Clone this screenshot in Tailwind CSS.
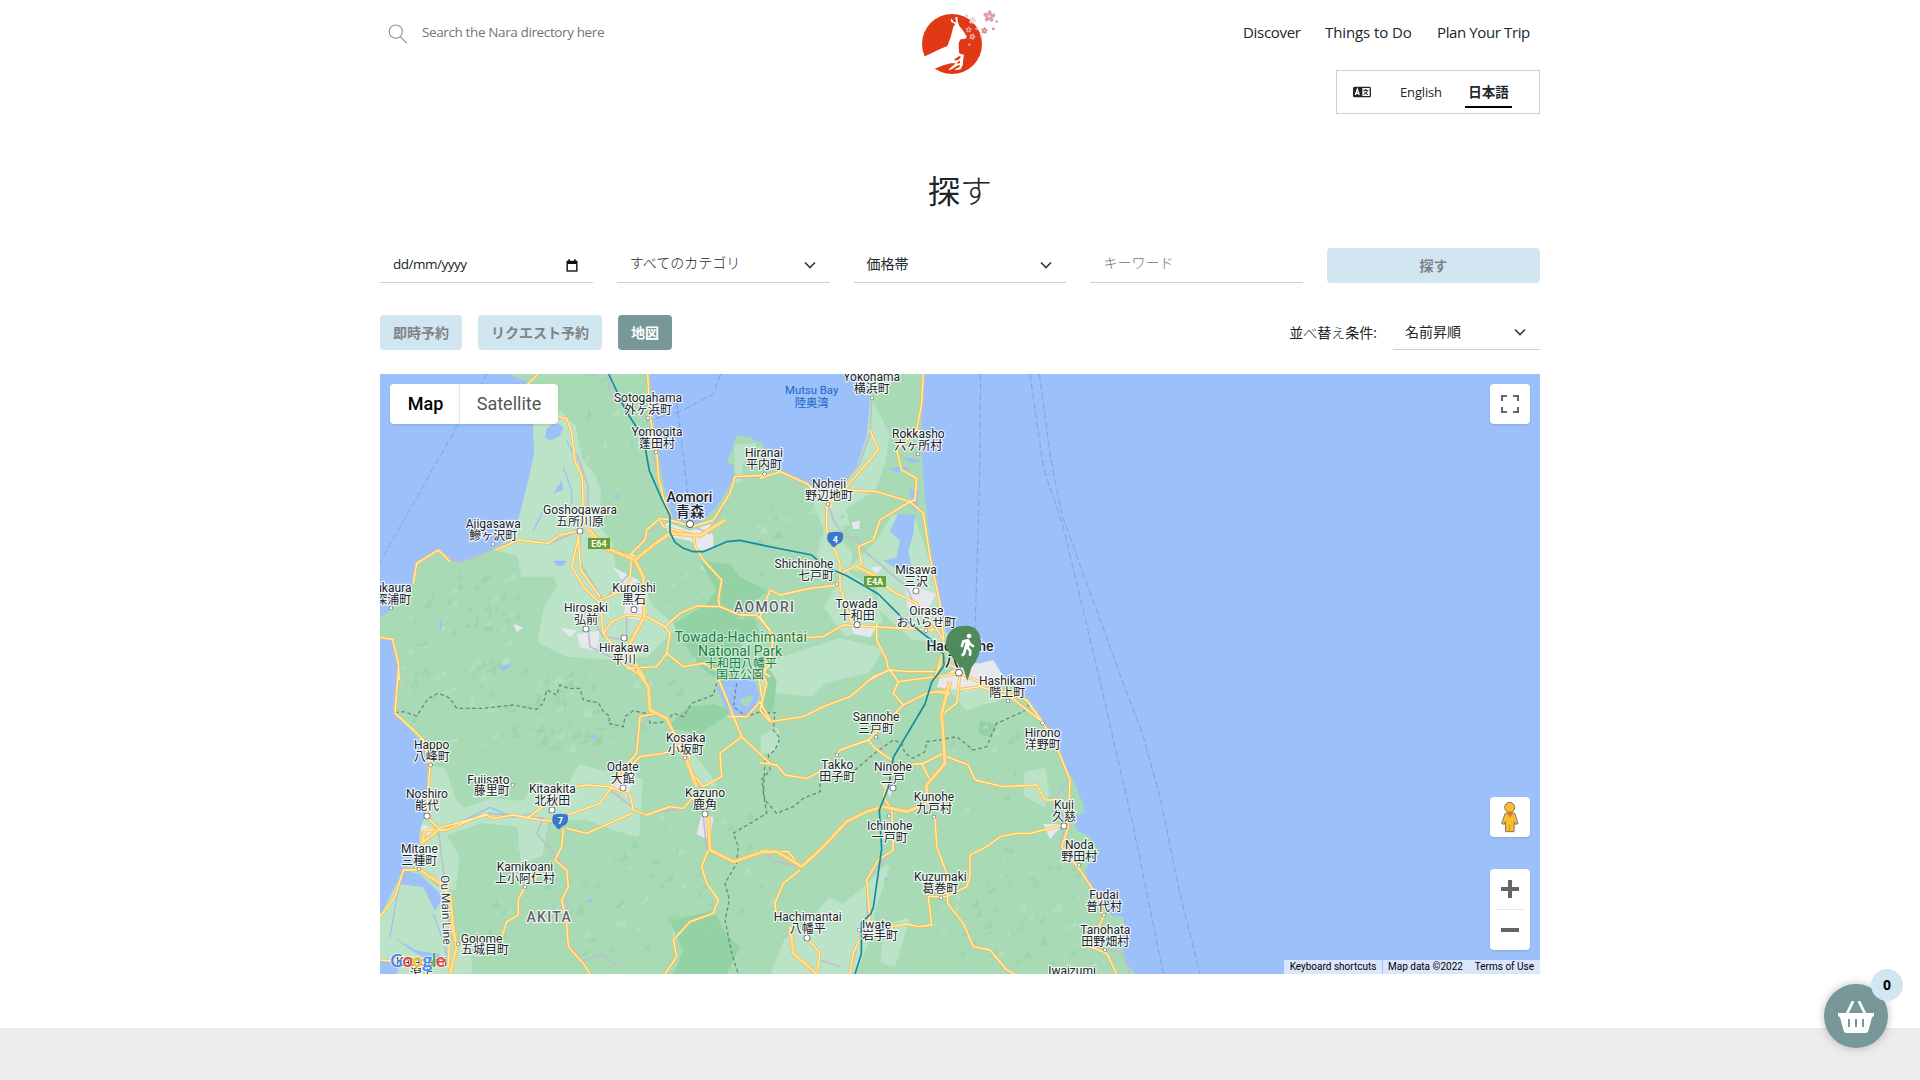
<!DOCTYPE html>
<html lang="ja">
<head>
<meta charset="utf-8">
<title>探す | Nara</title>
<script src="https://cdn.jsdelivr.net/npm/@tailwindcss/browser@4"></script>
</head>
<body class="h-[1080px] overflow-hidden bg-white font-['Open_Sans','Noto_Sans_CJK_JP',sans-serif] text-sm text-[#212529]">
<div class="mx-auto flex h-[1028px] w-[1160px] flex-col">
  <header class="relative flex h-[66px] justify-between">
    <div class="flex h-[66px] items-center pl-2">
      <svg class="mt-0.5 h-5 w-5" viewBox="0 0 20 20" fill="none" stroke="#8a9396" stroke-width="1.1"><circle cx="7.8" cy="7.6" r="6.6"/><path d="M12.3 12.6 18.8 19.2"/></svg>
      <span class="-mt-px ml-[14px] text-[13.5px] tracking-[-0.38px] text-[#6c757d]">Search the Nara directory here</span>
    </div>
    <svg class="absolute left-[530px] top-0 h-[90px] w-[100px]" viewBox="0 0 300 270">
      <circle cx="126" cy="132" r="90" fill="#e13816"/>
      <path fill="#fff" d="M30 176 42 170 92 146 112 138 122 112 130 80 136 72 124 66 122 54 128 60 131 66 138 67 136 51 142 52 144 67 148 78 158 90 171 110 166 116 152 118 146 128 147 158 152 162 162 164 160 176 158 196 152 208 138 210 134 208 148 202 150 194 140 198 128 206 116 211 118 206 138 190 122 190 100 196 74 206 60 212 30 200Z"/>
      <g fill="#e13816"><path d="M134 177l14-9 5 3-7 8-12 3Z"/><path d="M140 188l9-6 2 6-6 3Z"/></g>
      <defs><g id="flower"><ellipse cx="0" cy="-10" rx="6" ry="8.5"/><ellipse cx="0" cy="-10" rx="6" ry="8.5" transform="rotate(72)"/><ellipse cx="0" cy="-10" rx="6" ry="8.5" transform="rotate(144)"/><ellipse cx="0" cy="-10" rx="6" ry="8.5" transform="rotate(216)"/><ellipse cx="0" cy="-10" rx="6" ry="8.5" transform="rotate(288)"/></g></defs>
      <g fill="#dfa0b0"><use href="#flower" transform="translate(238 49) rotate(4)"/>
      <use href="#flower" fill="#f3cdcf" transform="translate(187 62) scale(.6) rotate(15)"/>
      <use href="#flower" fill="#eb9c93" transform="translate(176 89) scale(.53)"/>
      <use href="#flower" fill="#efb3ad" transform="translate(187 110) scale(.52) rotate(20)"/>
      <use href="#flower" fill="#c98894" transform="translate(223 92) scale(.55) rotate(10)"/>
      <circle cx="250" cy="86" r="4.5"/><circle cx="260" cy="65" r="4"/><circle cx="178" cy="134" r="4" fill="#ef8c82"/><circle cx="170" cy="47" r="4.5" fill="#f3c4c8"/><circle cx="200" cy="86" r="4" fill="#e7a0a0"/><circle cx="213" cy="110" r="3" fill="#e7a0a0"/></g>
      <g fill="#fff"><circle cx="238" cy="49" r="3"/><circle cx="187" cy="62" r="2"/><circle cx="176" cy="89" r="2.4" fill="#e13816"/><circle cx="187" cy="110" r="2.4" fill="#e13816"/><circle cx="223" cy="92" r="2"/></g>
    </svg>
    <nav class="flex h-[66px] items-center gap-6 pr-[10px] text-[15px]">
      <a class="w-[58px] whitespace-nowrap tracking-[-0.3px]">Discover</a>
      <a class="w-[88px] whitespace-nowrap tracking-[-0.1px]">Things to Do</a>
      <a class="w-[93px] whitespace-nowrap tracking-[-0.38px]">Plan Your Trip</a>
    </nav>
  </header>
  <div class="mt-1 flex h-11 w-[204px] items-center self-end border border-[#ced1d3] pl-4">
    <svg class="h-3 w-[18px]" viewBox="0 0 54 36"><rect y="2" width="54" height="32" rx="5" fill="#212529"/><path fill="#fff" d="M28 6h22v24H28z"/><path d="M7 27 13 10 19 27M9 22h8" stroke="#fff" stroke-width="4" fill="none"/><path d="M31 13h15M38 9v4M44 14q-4 9-12 12M34 17q4 7 11 9" stroke="#212529" stroke-width="3" fill="none"/></svg>
    <span class="ml-[29px] w-[44px] whitespace-nowrap text-[13px] tracking-[-0.15px]">English</span>
    <span class="ml-[21px] mt-[7px] flex h-[30px] w-[47px] items-center justify-center self-start border-b-2 border-black pt-0.5 text-[13.5px] font-bold">日本語</span>
  </div>
  <h1 class="mt-[53px] flex h-12 items-center justify-center text-[32px]"><span>探</span><span class="font-light">す</span></h1>
  <form class="mt-[33px] grid h-[34px] grid-cols-5 gap-6">
    <div class="flex items-center justify-between border-b border-[#ced1d3] pl-[13px] pr-[15px] text-[13.5px] tracking-[-0.5px]"><span>dd/mm/yyyy</span>
      <svg class="h-[13px] w-3" viewBox="0 0 12 13"><path d="M1.2 2.5h9.6v9.6H1.2z" fill="none" stroke="#222" stroke-width="1.5"/><path d="M1 2h10v3H1zM2.3.3h1.6V3H2.3zM8.1.3h1.6V3H8.1z" fill="#111"/></svg></div>
    <div class="flex items-center justify-between border-b border-[#ced1d3] pl-[13px] pr-[14px]"><span class="-mt-1 font-light">すべてのカテゴリ</span><svg class="h-3 w-3" viewBox="0 0 12 12" fill="none" stroke="#343a40" stroke-width="1.7"><path d="M1 3.5 6 8.5l5-5"/></svg></div>
    <div class="flex items-center justify-between border-b border-[#ced1d3] pl-[13px] pr-[14px]"><span class="-mt-0.5">価格帯</span><svg class="h-3 w-3" viewBox="0 0 12 12" fill="none" stroke="#343a40" stroke-width="1.7"><path d="M1 3.5 6 8.5l5-5"/></svg></div>
    <div class="flex items-center border-b border-[#ced1d3] pl-[13px]"><span class="-mt-1 font-light text-[#6c757d]">キーワード</span></div>
    <button class="h-[35px] rounded bg-[#d2e6f1] font-bold text-[#7d8488]">探す</button>
  </form>
  <div class="mt-[33px] flex h-[35px] items-center gap-4 text-sm">
    <button class="h-[35px] w-[82px] whitespace-nowrap rounded bg-[#d2e6f1] font-bold text-[#7d8488]">即時予約</button>
    <button class="h-[35px] w-[124px] whitespace-nowrap rounded bg-[#d2e6f1] font-bold text-[#7d8488]">リクエスト予約</button>
    <button class="h-[35px] w-[54px] whitespace-nowrap rounded bg-[#789798] font-bold text-white">地図</button>
    <span class="ml-auto text-sm">並<span class="font-light">べ</span>替<span class="font-light">え</span>条件:</span>
    <div class="flex h-[35px] w-[147px] items-center justify-between border-b border-[#ced1d3] pl-3 pr-[14px]"><span>名前昇順</span><svg class="h-3 w-3" viewBox="0 0 12 12" fill="none" stroke="#343a40" stroke-width="1.7"><path d="M1 3.5 6 8.5l5-5"/></svg></div>
  </div>

  <div class="relative mt-6 h-[600px] w-[1160px] overflow-hidden bg-[#9cc0f9] font-['Roboto','Noto_Sans_CJK_JP',sans-serif]">
    <svg class="block h-[600px] w-[1160px]" viewBox="0 0 3480 1800">
      <defs>
        <path id="land" d="M385 0 420 16 445 23 460 150 462 238 448 308 430 378 415 438 400 488 370 503 340 528 290 548 240 568 210 558 175 528 110 568 100 618 80 658 40 703 0 728V788L35 798 55 858 58 900 45 1018 100 1078 135 1118 148 1188 145 1228 138 1318 120 1368 115 1448 70 1488 0 1628V1800H2265L2240 1768 2225 1708 2235 1668 2230 1628 2200 1628 2160 1578 2130 1538 2115 1488 2140 1458 2160 1433 2130 1388 2090 1368 2080 1328 2115 1313 2105 1278 2080 1218 2045 1158 2020 1098 1990 1038 1950 983 1900 928 1870 905 1855 883 1840 858 1800 868 1760 868 1730 818 1695 768 1680 688 1660 588 1645 468 1632 338 1625 238 1625 138 1630 0H1460L1470 88 1460 188 1430 278 1390 338 1340 358 1290 338 1240 308 1205 288 1170 258 1160 233 1145 206 1125 200 1110 188 1070 183 1055 228 1040 265 1062 272 1060 318 1035 358 1010 398 970 438 930 458 875 428 865 388 850 328 832 238 820 128 808 0Z"/>
        <clipPath id="onland"><use href="#land"/></clipPath>
      </defs>
      <use href="#land" fill="#a8dab5"/>
      <g clip-path="url(#onland)">
        <g fill="#bbe3c7" stroke="#bbe3c7" stroke-width="16" stroke-linejoin="round">
          <path d="M460 150 540 120 580 160 600 260 640 310 655 350 650 460 690 510 700 600 790 650 810 700 880 760 800 840 700 850 560 840 480 800 500 700 540 640 530 600 430 600 420 540 340 520 410 440Z"/>
          <path d="M1470 80 1520 180 1510 260 1480 340 1440 370 1390 400 1400 450 1350 480 1410 540 1400 600 1460 640 1500 740 1400 780 1340 700 1390 610 1320 540 1340 470 1310 390 1350 360 1430 280Z"/>
          <path d="M1600 440 1640 560 1680 700 1700 800 1600 790 1500 700 1500 600 1420 580 1500 500 1540 430Z"/>
          <path d="M1150 880 1230 850 1380 800 1500 830 1460 890 1330 920 1290 960 1200 950 1140 960Z"/>
          <path d="M145 1180 190 1190 220 1280 250 1310 340 1280 430 1290 480 1230 560 1260 600 1180 680 1200 780 1220 770 1380 700 1360 620 1330 500 1330 480 1440 430 1460 420 1350 300 1340 190 1380 230 1450 220 1540 130 1500 110 1450Z"/>
          <path d="M20 1520 110 1500 190 1560 200 1700 260 1720 270 1790 0 1800V1640Z"/>
          <path d="M1460 1540 1520 1480 1480 1600 1460 1700 1420 1800H1180L1220 1700 1290 1650 1350 1580 1390 1600ZM1520 1660 1580 1640 1540 1770 1510 1760Z"/>
          <path d="M1710 940 1850 930 1860 970 1760 1000ZM1940 1200 1990 1190 2000 1260 1990 1290 1940 1260ZM1150 1090 1190 1070 1190 1110 1170 1130 1150 1130Z"/>
          <path d="M1070 220 1120 215 1080 270 1075 320ZM970 580 1060 620 1090 640 1010 600ZM930 1140 980 1200 1000 1230 940 1220Z"/>
        </g>
        <g fill="#93d2a4">
          <path d="M960 560 1050 570 1080 610 1160 650 1110 700 1140 780 1080 800 1100 880 1030 930 950 870 910 800 880 750 980 690 1010 650Z"/>
          <path d="M1000 990 920 1000 860 1060 960 1080 1060 1010ZM870 1640 1000 1610 1040 1680 1080 1720 1040 1800 880 1800 910 1730ZM1800 1040 1850 1050 1830 1090 1795 1080ZM1160 870 1190 920 1180 1010 1150 1020Z"/>
        </g>
        <g id="relief"></g>
        <g fill="#e6e8ee">
          <path d="M850 440 930 470 990 450 1000 490 1000 520 960 530 930 500 870 490ZM590 780 660 770 650 830 600 820ZM540 760 590 770 570 790ZM740 670 800 660 800 740 730 730ZM700 580 780 620 740 640ZM400 750 430 760 410 775ZM1580 630 1670 660 1640 710 1580 700ZM1410 740 1490 760 1470 790 1420 780ZM1770 860 1840 850 1870 900 1890 930 1760 950 1670 940 1680 910ZM1500 1220 1540 1240 1530 1270ZM1990 1350 2050 1350 2010 1395ZM720 1200 760 1220 740 1270 700 1240ZM120 1350 180 1370 130 1390ZM965 1320 1000 1330 990 1400 950 1380ZM1320 370 1370 360 1350 410ZM1415 445 1440 440 1438 465 1420 465ZM1470 580 1510 575 1490 600Z"/>
        </g>
        <g fill="#9cc0f9">
          <path d="M1555 420 1605 422 1600 480 1585 530 1598 600 1560 590 1510 560 1550 550 1560 500 1530 470Z"/>
          <path d="M1568 250 1615 255 1620 265 1590 265ZM1525 285 1570 275 1590 285 1550 295ZM1590 345 1618 350 1610 410 1595 400ZM500 165 525 145 550 160 540 185 510 200 495 190ZM520 360 545 320 550 345ZM1010 940 1050 915 1120 910 1140 960 1120 1010 1080 1035 1040 1010ZM520 560 560 560 550 575 530 575ZM70 1490 120 1500 190 1570 165 1610 130 1540 60 1530 40 1500ZM40 1690 110 1730 180 1740 170 1770 110 1740ZM0 1760 60 1765 50 1800H0Z"/>
          <path d="M355 878 400 868 370 892ZM630 1098 640 1078 650 1090ZM615 1585 640 1570 635 1585ZM1510 1510 1525 1515 1515 1525ZM180 730 188 755 180 770ZM700 364 720 362 708 374Z"/>
        </g>
        <path d="M1090 975q20-20 30-5l-15 25q-20 10-25-20" fill="#a8dab5"/>
        <path d="M60 1530 45 1600 30 1690M160 1620 190 1700 200 1750M460 470 490 410M560 200 590 260M550 280 575 350 575 390M240 1345 330 1300 400 1330 470 1315" fill="none" stroke="#9cc0f9" stroke-width="4"/>
      </g>

      <g fill="none" stroke="#76a5f2" stroke-width="3" stroke-dasharray="20 9">
        <path d="M320 0 0 565M1022 0 1000 60 905 110 790 145M890 85 932 430M1802 0 1798 350 1785 770M1950 0 1990 280 2050 460 2155 900 2260 1358 2350 1800M1978 0 2010 240 2045 420 2215 888 2290 1088 2340 1268 2400 1560 2460 1800"/>
      </g>

      <g fill="none" stroke="#6b8b77" stroke-width="4" stroke-dasharray="11 8">
        <path transform="translate(-30 888)" d="M75 128 100 125 140 138 175 85 205 70 240 85 260 115 340 115 430 105 500 118 520 100 530 60 560 75 570 45 595 55 630 55 640 90 685 98 700 125 720 140 715 160 760 170 765 140 790 122 835 132 840 160 890 155 910 130 940 140 965 100 1030 75 1040 40M1100 40 1090 110 1130 140 1170 125 1200 130"/>
        <path transform="translate(1140 888)" d="M0 128 45 128 40 180 60 205 45 240 25 255 30 300 5 330 15 390 50 430 100 410 130 385 180 365 180 340M285 300 350 245 400 210 425 220 435 250 460 265 495 245 500 215 540 210 590 200 640 240 680 230 710 160 790 125 810 100"/>
        <path transform="translate(-30 888)" d="M1200 280 1185 270 1180 370 1190 430 1140 460 1090 490 1105 530 1100 580 1065 640 1078 690 1065 750 1085 850 1105 912"/>
      </g>

      <g fill="none" stroke="#bcc0cb" stroke-width="5">
        <path transform="translate(-30 -12)" d="M712 12 722 70 770 120 833 143M838 150 850 260 880 380 900 440 970 470 1020 490 1075 380 1095 325 1200 318M900 450 830 490 785 550 780 610 700 690 630 580 630 480M620 250 655 350 650 450M630 480 540 520 440 510 380 530 270 578 205 540 140 580M690 690 680 770 700 800 770 810 770 740M655 780 660 830 800 900"/>
        <path transform="translate(1140 -12)" d="M335 90 330 190 300 280 250 340 200 390 220 450 250 500 290 505 310 540 380 600 440 650 460 700M60 300 150 350 200 400"/>
        <path transform="translate(-30 888)" d="M88 10 75 130 165 210 175 350 168 440 205 480 350 430 520 445 500 490 560 560 590 600 590 820M205 480 220 600 240 780M1000 440 1010 540M720 360 785 410 820 435 940 415M850 130 800 180 795 250 740 320M590 820 640 870 700 853 740 890"/>
        <path transform="translate(1140 888)" d="M0 540 45 575 120 590M390 420 405 530 345 600 320 640 322 740 290 830 270 912M500 70 400 130 350 190 380 260M880 200 925 330 890 380 915 460 900 530 970 610M1000 830 1090 850 1110 912M180 870 240 890"/>
      </g>

      <defs>
        <g id="minor" fill="none" stroke-linejoin="round">
          <path transform="translate(-30 -12)" d="M502 14 470 45M565 140 590 145 605 185 615 275 637 320 640 440 650 470M833 12 840 140 860 240 865 320 885 400 905 440M650 475 680 520 720 545 795 558M630 482 570 495 535 520 445 510 380 540M630 482 605 590 640 650 690 700M625 500 632 600 690 680M690 690 740 670 780 630 785 550 825 510 830 480 870 445 900 450M690 700 700 790 725 755 770 735 830 740 885 770 900 790 890 850 940 890 1000 880 1040 900M885 770 930 730 980 708 1050 710 1110 735 1160 735 1200 780M700 790 740 840 760 880 820 925M970 490 975 530 1000 570 1055 630 1045 690 1050 710M900 450 970 470 1030 450 1080 370 1095 320 1200 315M870 450 880 470 970 495M30 802 68 808 85 880 88 930M205 540 140 580 130 640M240 575 205 540M890 850 860 890 770 895M1180 900 1200 860"/>
          <path transform="translate(1140 -12)" d="M490 12 485 100 470 180 410 240 425 300 470 325 465 390 450 395M330 180 355 240 260 350 200 410 200 480 240 580 240 650 275 760M0 325 60 305 140 340 200 400M255 360 350 365 450 395 360 450 340 510 295 530 305 580 240 610M295 590 400 665 470 700 520 780M450 395 490 430 510 560 540 700 550 800 545 870M0 800 140 802 190 800 250 765 430 775 520 780M350 760 350 810 380 870 385 900 330 930M385 900 450 905 530 905M235 645 150 655 60 675 30 660 0 740 40 800 30 880 0 925M600 900 560 880M520 760 550 810"/>
          <path transform="translate(-30 888)" d="M85 0 75 130 130 180 160 210 180 290 175 350 170 440 205 475 350 435 370 445 430 435 510 450 560 455M620 350 650 345 715 350 780 375 790 420 830 435 900 410 940 415 980 370M520 410 470 445M590 435 640 418 690 400 730 345M590 475 650 490 730 455 785 430M580 475 575 530 555 570 590 600 595 650 575 690 590 760 595 830 640 880 660 912M730 340 810 260 880 250 945 230 960 270M170 480 230 480 350 430M860 130 810 140 800 250 740 320M950 290 1000 350 1055 320 1050 250 1115 200 1200 280M1045 25 1075 100 1115 200M1170 0 1200 20M1075 140 1130 140 1170 95 1200 150M1165 10 1175 80M145 600 100 600 75 680 30 740M465 650 445 690 445 735 410 755 390 820M510 600 490 640M1015 540 995 590 1010 640 1045 690 1030 730 960 755 910 810 920 860 885 912M240 760 235 890M30 870 100 875"/>
          <path transform="translate(1140 888)" d="M0 0 20 40 0 120 30 155 130 140 190 110 270 80 340 20 390 0 415 35 400 70 430 105 500 70 560 60M430 105 350 185 325 210 240 240 230 255M325 210 345 235 395 270M0 278 50 285 75 315 140 325 190 300M415 35 530 20 600 10 690 50 800 90 850 160 890 230 930 330 925 470 905 530 960 600 1020 690 1030 740 990 830 1040 850 1070 912M600 10 590 100 550 130M560 260 625 285 645 330 730 350 830 345 855 390 910 390M550 250 490 280 440 285M485 280 510 330M395 300 370 380 395 420 400 540 355 570 320 630 330 740 280 850 270 912M525 440 530 530 560 610 563 700 610 760 640 830 690 840 740 900 765 912M910 465 810 490 770 490 720 500 680 530 630 555 630 620 620 650 560 680 505 680 515 765 475 770 440 762 395 770M120 590 85 545 0 545M120 600 70 640 45 700 50 740M140 800 180 850 170 912M600 58 660 50 750 80 840 150"/>
        </g>
        <g id="major" fill="none" stroke-linejoin="round">
          <path transform="translate(-30 -12)" d="M660 480 700 530 795 570 850 525 900 490 990 497 1065 450M795 570 820 620 823 740 780 820 790 870 825 930"/>
          <path transform="translate(1140 -12)" d="M290 590 350 620M545 860 525 930"/>
          <path transform="translate(-30 888)" d="M800 0 835 50 840 120 890 145 950 270 980 350M1015 440 1020 540 1090 575 1180 545 1200 548M165 480 155 520 205 480M150 600 210 640 240 680 250 780 260 830 240 912"/>
          <path transform="translate(1140 888)" d="M570 35 545 130 555 280 500 345 500 400 440 425 370 410 320 425 260 455 190 530 125 590 50 545 0 545M90 770 100 850 170 912M530 65 570 70"/>
        </g>
      </defs>
      <use href="#minor" stroke="#f9bd50" stroke-width="9"/>
      <use href="#minor" stroke="#fff1b5" stroke-width="4"/>
      <use href="#major" stroke="#f9bd50" stroke-width="13"/>
      <use href="#major" stroke="#ffdf92" stroke-width="8"/>
      <path d="M686 0 740 115 790 190 808 290 845 375 870 425 870 475 885 505 910 523 940 533 970 533 1040 503 1080 499 1140 512 1295 543 1330 575 1400 605 1495 660 1560 725 1650 795 1690 840 1692 875 1655 925 1635 990 1540 1150 1525 1240 1498 1308 1505 1425 1480 1600 1472 1620 1445 1645 1444 1740 1425 1800" fill="none" stroke="#128c9f" stroke-width="5" stroke-linejoin="round"/>

      <g font-weight="700" font-size="27" fill="#fff" text-anchor="middle">
        <path fill="#689f38" d="M624 492h66v33h-66zM1452 606h66v33h-66z"/>
        <text x="657" y="518">E64</text><text x="1485" y="632">E4A</text>
        <path id="shield" fill="#3b78c8" d="M1345 476q23-6 43 0 4 20-6 30-16 6-18 14-8 0-14-12-14-10-5-32"/>
        <use href="#shield" x="-825" y="846"/>
        <text x="1366" y="506">4</text><text x="541" y="1350">7</text>
      </g>
      <g id="places" paint-order="stroke" stroke-linejoin="round"></g>

      <g fill="#4f8a5b"><path d="M1762 921 1749 880Q1697 830 1698 800A50 50 0 0 1 1740 757Q1800 760 1802 812 1800 850 1775 880Z"/><path d="M1740 757Q1800 745 1803 808 1800 840 1778 860L1762 892 1746 880Q1690 830 1698 800"/><path d="M1700 810Q1706 840 1725 855L1741 884 1756 850Z"/></g>
      <g fill="none" stroke="#fff" stroke-linecap="round" stroke-linejoin="round"><circle cx="1767" cy="786" r="6" fill="#fff" stroke-width="2"/><path stroke-width="8" d="M1762 800 1756 824 1752 840M1746 816 1750 802 1764 799 1770 810 1779 816M1766 806 1763 820 1771 832 1770 842M1757 822 1753 836 1748 843"/></g>
    </svg>

    <div class="absolute left-[10px] top-[10px] flex h-10 w-[168px] items-center rounded-sm bg-white text-lg shadow-sm">
      <div class="flex h-10 w-[70px] items-center justify-center border-r border-[#e6e6e6] pl-0.5 font-medium text-black">Map</div>
      <div class="flex-1 text-center text-[#565656]">Satellite</div>
    </div>
    <div class="absolute right-[10px] top-[10px] flex h-10 w-10 items-center justify-center rounded-sm bg-white shadow-sm">
      <svg class="h-[18px] w-[18px]" viewBox="0 0 18 18" fill="none" stroke="#666" stroke-width="2"><path d="M1 6V1h5M12 1h5v5M17 12v5h-5M6 17H1v-5"/></svg>
    </div>
    <div class="absolute right-[10px] top-[423px] flex h-10 w-10 items-center justify-center rounded-sm bg-white shadow-sm">
      <svg class="h-8 w-5" viewBox="0 0 60 96"><g fill="#fbbc2e" stroke="#87785a" stroke-width="3"><path d="M15 38Q30 28 45 38L54 68 46 70 43 62 42 92H17L16 62 13 70 5 68Z"/><circle cx="29" cy="19" r="15"/></g><path d="M20 36h19l-9 14z" fill="#e07c28"/><path d="M29 70v20" stroke="#b98a2c" stroke-width="2"/></svg>
    </div>
    <div class="absolute right-[10px] top-[495px] flex h-[81px] w-10 flex-col items-center rounded-sm bg-white shadow-sm">
      <svg class="h-10 w-10" viewBox="0 0 40 40" stroke="#666" stroke-width="4"><path d="M11 20h18M20 11v18"/></svg>
      <div class="h-px w-[30px] bg-[#e6e6e6]"></div>
      <svg class="h-10 w-10" viewBox="0 0 40 40" stroke="#666" stroke-width="4"><path d="M11 20h18"/></svg>
    </div>
    <div class="absolute bottom-0 right-0 flex h-[14px] gap-px text-[10px] leading-[14px] text-black">
      <span class="w-[98px] whitespace-nowrap bg-[#d9e6fb] text-center">Keyboard shortcuts</span>
      <span class="flex w-[157px] justify-between whitespace-nowrap bg-[#d9e6fb] pl-[5px] pr-[6px]"><span>Map data ©2022</span><span>Terms of Use</span></span>
    </div>
    <div class="absolute bottom-0 left-[10px] font-['Open_Sans',sans-serif] text-[18px] font-semibold leading-[27px] tracking-[-0.9px] [text-shadow:0_0_2px_white,0_0_2px_white]"><span class="text-[#4285f4]">G</span><span class="text-[#ea4335]">o</span><span class="text-[#fbbc05]">o</span><span class="text-[#4285f4]">g</span><span class="text-[#34a853]">l</span><span class="text-[#ea4335]">e</span></div>
  </div>
</div>
<footer class="h-[52px] bg-[#ececec]"></footer>
<div class="fixed left-[1824px] top-[984px] flex h-16 w-16 items-center justify-center rounded-full bg-[#789798] shadow-[0_0_10px_rgba(0,0,0,0.25)]">
  <svg class="mt-0.5 h-8 w-9" viewBox="0 0 108 96"><path d="M0 36h108v9l-6 4-11 41q-2 6-8 6H25q-6 0-8-6L6 49l-6-4z" fill="#fff"/><path d="M27 38 44 3M81 38 64 3" stroke="#fff" stroke-width="8" stroke-linecap="round"/><path d="M33 56v20M54 56v20M75 56v20" stroke="#789798" stroke-width="6" stroke-linecap="round"/></svg>
  <span class="absolute left-[47px] top-[-15px] flex h-8 w-8 items-center justify-center rounded-full bg-[#d2e6f1] text-sm font-bold text-black">0</span>
</div>
<script>
const NS = 'http://www.w3.org/2000/svg';
const add = (parent, tag, attrs, text) => {
  const el = document.createElementNS(NS, tag);
  for (const k in attrs) el.setAttribute(k, attrs[k]);
  if (text) el.textContent = text;
  parent.append(el);
};
// Hill shading: small facets scattered over the mountains [cx, cy, rx, ry, count]
let seed = 7;
const rnd = () => (seed = (seed * 16807) % 2147483647) / 2147483647;
const relief = document.getElementById('relief');
[[230,760,170,150,60],[350,1020,280,120,60],[630,1580,330,170,50],[620,1040,200,100,20],[720,160,120,200,14],[1000,800,150,200,30],[1000,1500,200,200,20],[1880,1600,200,180,50],[1750,1200,200,140,14],[1260,450,140,70,14]].forEach(([cx,cy,rx,ry,n]) => {
  for (let i = 0; i < n; i++) {
    const x = cx + (rnd()*2-1)*rx, y = cy + (rnd()*2-1)*ry, a = 8 + rnd()*16, b = 10 + rnd()*22;
    add(relief, 'path', {d:`M${x} ${y}l${a} ${-b}l${a*.3} ${b*.9}z`, fill: i%3 ? '#98d2a9' : '#b9e2c4', opacity:.6});
  }
});
// Place names: x, y of the Latin baseline, names, then marker x, y, radius
const P = [
[804,83,'Sotogahama','外ヶ浜町',804,132,5],[831,184,'Yomogita','蓬田村',828,234,5],[1152,249,'Hiranai','平内町',1154,300,5],
[600,418,'Goshogawara','五所川原',600,471,8],[340,460,'Ajigasawa','鰺ヶ沢町',339,510,5],[40,652,'ukaura','深浦町',33,702,5],
[762,654,'Kuroishi','黒石',762,707,8],[618,712,'Hirosaki','弘前',618,765,8],[732,834,'Hirakawa','平川',732,792,8],
[1475,21,'Yokohama','横浜町',1476,72,5],[1615,190,'Rokkasho','六ヶ所村',1614,240,5],[1347,340,'Noheji','野辺地町',1344,390,5],
[1272,580,'Shichinohe','',1371,630,5],[1608,598,'Misawa','三沢',1608,651,8],[1430,700,'Towada','十和田',1431,752,8],[1639,721,'Oirase','おいらせ町',1638,770,5],
[155,1123,'Happo','八峰町',152,1173,5],[325,1228,'Fujisato','',399,1233,5],[141,1272,'Noshiro','能代',141,1326,8],[517,1255,'Kitaakita','北秋田',516,1308,8],
[728,1189,'Odate','大館',729,1242,8],[917,1102,'Kosaka','小坂町',915,1152,5],[975,1267,'Kazuno','鹿角',975,1320,8],[118,1435,'Mitane','三種町',117,1485,5],
[435,1489,'Kamikoani','上小阿仁村',435,1539,5],[305,1705,'Gojome','',234,1710,5],[1882,931,'Hashikami','階上町',1884,981,5],[1988,1087,'Hirono','洋野町',1988,1047,5],
[1488,1039,'Sannohe','三戸町',1488,1089,5],[1372,1184,'Takko','田子町',1371,1143,5],[1539,1189,'Ninohe','二戸',1539,1242,8],[1662,1279,'Kunohe','九戸村',1662,1329,5],
[1529,1366,'Ichinohe','一戸町',1527,1326,5],[2052,1303,'Kuji','久慈',2052,1356,8],[2098,1423,'Noda','野田村',2097,1473,5],[2172,1573,'Fudai','普代村',2172,1623,5],
[2176,1678,'Tanohata','田野畑村',2175,1728,5],[1681,1521,'Kuzumaki','葛巻町',1683,1572,5],[1283,1639,'Hachimantai','八幡平',1281,1692,8],[1490,1663,'Iwate','',1437,1668,5],
[2076,1801,'Iwaizumi','',0,-20,5],[125,1775,'Katagami','潟上',0,-20,5]];
const g = document.getElementById('places');
const label = (x, y, t, o = {}) => add(g, 'text', {x, y, 'text-anchor':'middle', 'font-size':36, fill:'#202429', stroke:'#fff', 'stroke-width':7, 'stroke-opacity':.85, ...o}, t);
P.forEach(([x,y,en,jp]) => {
  label(x, y+1, en);
  if (jp) label(x, y+37, jp);
});
label(1308,617,'七戸町'); label(335,1262,'藤里町'); label(315,1741,'五城目町'); label(1500,1699,'岩手町');
label(928,384,'Aomori',{'font-size':42,'font-weight':500}); label(930,429,'青森',{'font-size':43,'font-weight':500});
label(1740,832,'Hachinohe',{'font-size':42,'font-weight':500}); label(1737,875,'八戸',{'font-size':43,'font-weight':500});
const region = {'font-size':42,'font-weight':500,fill:'#5f6368','letter-spacing':4};
label(1154,713,'AOMORI',region); label(508,1644,'AKITA',region);
const park = {fill:'#188045','stroke-opacity':.5};
label(1082,803,'Towada-Hachimantai',{...park,'font-size':42}); label(1080,845,'National Park',{...park,'font-size':42});
label(1083,881,'十和田八幡平',park); label(1080,914,'国立公園',park);
const sea = {fill:'#1967c9',stroke:'none','font-size':34};
label(1295,61,'Mutsu Bay',sea); label(1295,98,'陸奥湾',sea);
label(0,0,'Ou Main Line',{transform:'translate(186 1608) rotate(88)','font-size':36,fill:'#40464c'});
P.forEach(([,,,,cx,cy,r]) => add(g, 'circle', {cx, cy, r, fill:'#fff', stroke:'#444', 'stroke-width':r > 5 ? 4 : 3}));
add(g, 'circle', {cx:930, cy:450, r:9, fill:'#fff', stroke:'#333', 'stroke-width':4});
add(g, 'circle', {cx:1737, cy:896, r:9, fill:'#fff', stroke:'#333', 'stroke-width':4});
</script>
</body>
</html>
